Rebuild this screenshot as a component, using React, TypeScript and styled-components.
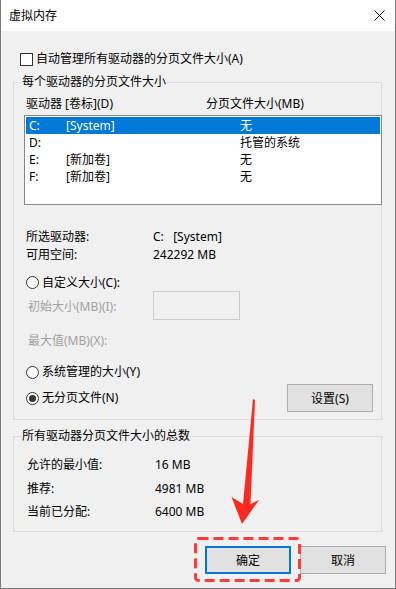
import React from "react";
import styled, { createGlobalStyle } from "styled-components";

const GlobalStyle = createGlobalStyle`
  html, body {
    margin: 0;
    padding: 0;
    background: #ffffff;
  }
  body {
    font-family: "Noto Sans", "Noto Sans CJK SC", sans-serif;
    font-size: 12px;
    color: #000;
  }
`;

const Window = styled.div`
  position: relative;
  width: 396px;
  height: 589px;
  box-sizing: border-box;
  border: 1px solid #7a7a7a;
  border-top: none;
  display: flex;
  flex-direction: column;
  background: #f0f0f0;
`;

const TitleBar = styled.div`
  height: 31px;
  flex-shrink: 0;
  background: #ffffff;
  display: flex;
  align-items: center;
  justify-content: space-between;
  padding: 0 10px 0 8px;
`;

const Title = styled.span`
  font-size: 12px;
  line-height: 18px;
  padding-top: 1px;
`;

const Body = styled.div`
  flex: 1;
  padding: 19px 13px 0 12px;
`;

const Text = styled.span<{ $disabled?: boolean }>`
  line-height: 18px;
  white-space: nowrap;
  color: ${({ $disabled }) => ($disabled ? "#a0a0a0" : "#000")};
`;

const CheckRow = styled.label`
  display: flex;
  align-items: center;
  gap: 3px;
  height: 18px;
  padding-left: 7px;
`;

const CheckBox = styled.span`
  width: 13px;
  height: 13px;
  box-sizing: border-box;
  border: 1px solid #333;
  background: #fff;
`;

const Group = styled.fieldset<{ $top: number }>`
  margin: ${({ $top }) => $top}px 0 0 0;
  padding: 0;
  border: 1px solid #dcdcdc;
  min-width: 0;
`;

const Legend = styled.legend`
  margin-left: 7px;
  padding: 0 1px;
  line-height: 18px;
`;

const GroupBody = styled.div<{ $pad: string }>`
  padding: ${({ $pad }) => $pad};
`;

const ListHeader = styled.div`
  display: grid;
  grid-template-columns: 180px 1fr;
  height: 18px;
  padding-left: 2px;
`;

const ListBox = styled.div`
  margin: 2px -1px 0 0;
  height: 90px;
  box-sizing: border-box;
  border: 1px solid #828790;
  background: #fff;
  padding: 1px;
`;

const ListRow = styled.div<{ $selected?: boolean }>`
  display: grid;
  grid-template-columns: 37px 174px 1fr;
  align-items: center;
  height: 17px;
  padding-left: 3px;
  background: ${({ $selected }) => ($selected ? "#0078d7" : "transparent")};
  color: ${({ $selected }) => ($selected ? "#fff" : "#000")};
  line-height: 17px;
  white-space: nowrap;
`;

const InfoGrid = styled.div<{ $top: number; $left: number; $col: number; $gap: number }>`
  display: grid;
  grid-template-columns: ${({ $col }) => $col}px 1fr;
  grid-auto-rows: 18px;
  row-gap: ${({ $gap }) => $gap}px;
  margin-top: ${({ $top }) => $top}px;
  padding-left: ${({ $left }) => $left}px;
`;

const RadioRow = styled.label<{ $top: number; $h?: number }>`
  display: flex;
  align-items: center;
  gap: 3px;
  height: ${({ $h }) => $h ?? 18}px;
  margin-top: ${({ $top }) => $top}px;
  padding-left: 2px;
`;

const Radio = styled.span<{ $checked?: boolean }>`
  width: 13px;
  height: 13px;
  box-sizing: border-box;
  border: 1px solid #333;
  border-radius: 50%;
  background: #fff;
  display: flex;
  align-items: center;
  justify-content: center;
  &::after {
    content: "";
    width: 7px;
    height: 7px;
    border-radius: 50%;
    background: ${({ $checked }) => ($checked ? "#333" : "transparent")};
  }
`;

const FieldRow = styled.div<{ $top: number; $h: number }>`
  display: flex;
  align-items: center;
  height: ${({ $h }) => $h}px;
  margin-top: ${({ $top }) => $top}px;
  padding-left: 4px;
`;

const FieldLabel = styled(Text)`
  width: 125px;
  padding-top: 3px;
`;

const SizeInput = styled.div`
  width: 87px;
  height: 29px;
  box-sizing: border-box;
  border: 1px solid #cccccc;
  background: #f0f0f0;
`;

const ActionRow = styled.div`
  display: flex;
  align-items: center;
  justify-content: space-between;
  height: 28px;
  margin-top: 3px;
  padding-right: 8px;
`;

const Button = styled.button<{ $default?: boolean }>`
  width: 86px;
  height: 28px;
  box-sizing: border-box;
  padding: 0;
  font-family: inherit;
  font-size: 12px;
  color: #000;
  background: #e1e1e1;
  border: ${({ $default }) => ($default ? "2px solid #0078d7" : "1px solid #adadad")};
`;

const Footer = styled.div`
  display: flex;
  justify-content: flex-end;
  gap: 9px;
  margin: 14px -4px 0 0;
`;

const Annotation = styled.svg`
  position: absolute;
  left: -1px;
  top: 0;
  pointer-events: none;
`;

const drives = [
  { drive: "C:", label: "[System]", size: "无", selected: true },
  { drive: "D:", label: "", size: "托管的系统" },
  { drive: "E:", label: "[新加卷]", size: "无" },
  { drive: "F:", label: "[新加卷]", size: "无" },
];

export default function App() {
  return (
    <>
      <GlobalStyle />
      <Window>
        <TitleBar>
          <Title>虚拟内存</Title>
          <svg width="11" height="11" viewBox="0 0 11 11">
            <path d="M0.5 0.5 L10.5 10.5 M10.5 0.5 L0.5 10.5" stroke="#000" strokeWidth="1" fill="none" />
          </svg>
        </TitleBar>
        <Body>
          <CheckRow>
            <CheckBox />
            <Text>自动管理所有驱动器的分页文件大小(A)</Text>
          </CheckRow>

          <Group $top={5}>
            <Legend>每个驱动器的分页文件大小</Legend>
            <GroupBody $pad="4px 0 7px 10px">
              <ListHeader>
                <Text>驱动器 [卷标](D)</Text>
                <Text>分页文件大小(MB)</Text>
              </ListHeader>
              <ListBox>
                {drives.map((d) => (
                  <ListRow key={d.drive} $selected={d.selected}>
                    <span>{d.drive}</span>
                    <span>{d.label}</span>
                    <span>{d.size}</span>
                  </ListRow>
                ))}
              </ListBox>

              <InfoGrid $top={23} $left={2} $col={127} $gap={0}>
                <Text>所选驱动器:</Text>
                <Text>C:&nbsp;&nbsp;&nbsp;[System]</Text>
                <Text>可用空间:</Text>
                <Text>242292 MB</Text>
              </InfoGrid>

              <RadioRow $top={10} $h={17}>
                <Radio />
                <Text>自定义大小(C):</Text>
              </RadioRow>
              <FieldRow $top={0} $h={29}>
                <FieldLabel $disabled>初始大小(MB)(I):</FieldLabel>
                <SizeInput />
              </FieldRow>
              <FieldRow $top={12} $h={18}>
                <Text $disabled>最大值(MB)(X):</Text>
              </FieldRow>

              <RadioRow $top={13}>
                <Radio />
                <Text>系统管理的大小(Y)</Text>
              </RadioRow>
              <ActionRow>
                <RadioRow $top={0}>
                  <Radio $checked />
                  <Text>无分页文件(N)</Text>
                </RadioRow>
                <Button>设置(S)</Button>
              </ActionRow>
            </GroupBody>
          </Group>

          <Group $top={7}>
            <Legend>所有驱动器分页文件大小的总数</Legend>
            <GroupBody $pad="11px 0 10px 13px">
              <InfoGrid $top={0} $left={0} $col={128} $gap={5.5}>
                <Text>允许的最小值:</Text>
                <Text>16 MB</Text>
                <Text>推荐:</Text>
                <Text>4981 MB</Text>
                <Text>当前已分配:</Text>
                <Text>6400 MB</Text>
              </InfoGrid>
            </GroupBody>
          </Group>

          <Footer>
            <Button $default>确定</Button>
            <Button>取消</Button>
          </Footer>
        </Body>

        <Annotation width="396" height="589" viewBox="0 0 396 589">
          <polygon
            points="253,399 255,400 250.5,504 259,500 242,524 231.5,497 243,504"
            fill="#ff2a1f"
          />
          <rect
            x="195.5"
            y="538.5"
            width="104"
            height="42"
            rx="3"
            fill="none"
            stroke="#ff3b3b"
            strokeWidth="3"
            strokeDasharray="10 5"
          />
        </Annotation>
      </Window>
    </>
  );
}
